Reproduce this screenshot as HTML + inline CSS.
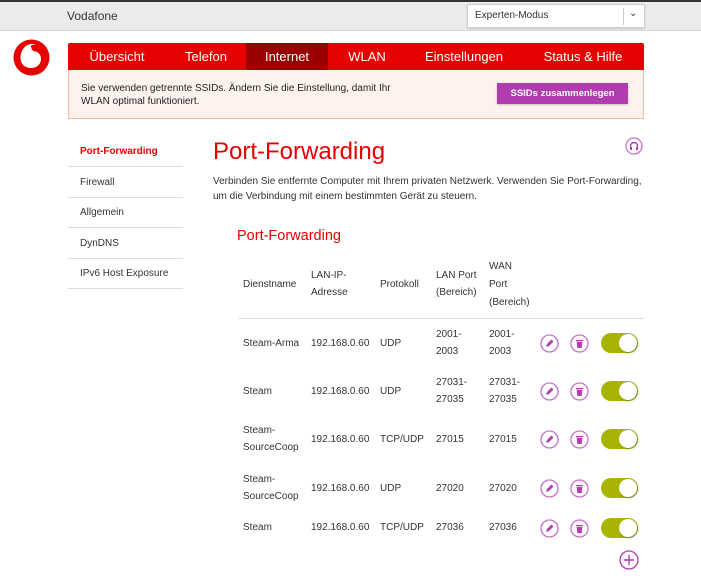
<!DOCTYPE html>
<html><head><meta charset="utf-8"><style>
*{margin:0;padding:0;box-sizing:border-box}
body{width:701px;height:585px;background:#fff;font-family:"Liberation Sans",sans-serif;color:#333;position:relative;overflow:hidden}
.a{position:absolute}
.top{left:0;top:0;width:701px;height:31px;background:#ebebeb;border-top:2px solid #333;border-bottom:1px solid #d6d6d6}
.nav{left:68px;top:43px;width:576px;height:27px;background:#e60000;border-radius:2px 2px 0 0}
.nav span{position:absolute;top:0;height:27px;line-height:27px;color:#fff;font-size:13px;text-align:center}
.side{font-size:10px;left:68px;width:115px;padding-left:12px;border-bottom:1px solid #ddd;height:30px;line-height:30px}
.t{font-size:10px;line-height:17px}
.tg{width:37px;height:20px;border-radius:10px;background:#a8b400}
.tg i{position:absolute;right:1px;top:1px;width:18px;height:18px;border-radius:50%;background:#fff;box-shadow:1px 1px 2px rgba(0,0,0,.3)}
</style></head><body>
<div class="a top"></div>
<div class="a" style="left:67px;top:9px;font-size:12px">Vodafone</div>
<div class="a" style="left:467px;top:4px;width:178px;height:24px;background:#fff;border:1px solid #ccc;box-shadow:0 1px 2px rgba(0,0,0,.15)"></div>
<div class="a" style="left:475px;top:10px;font-size:10px">Experten-Modus</div>
<div class="a" style="left:623px;top:8px;width:1px;height:17px;background:#ccc"></div>
<div class="a" style="left:629px;top:8px;font-size:10px">⌄</div>
<svg class="a" style="left:13px;top:39px" width="37" height="37" viewBox="0 0 37 37"><circle cx="18.5" cy="18.5" r="18" fill="#e60000"/><path d="M17 5C11 7 7.5 12 7.5 19c0 6 4.5 10 10.5 10s10-4 10-9c0-4.5-3-7.5-7-8 0-2.5 1-4.5 2.5-6-2-1-4-1.3-6.5-1z" fill="#fff"/><path d="M18 6.5c2-1 5-1.2 7-.5-2 1.3-3.5 3.5-3.5 6.5-2-.5-3.5-3-3.5-6z" fill="#e60000"/></svg>
<div class="a nav">
<span style="left:0;width:98px">Übersicht</span>
<span style="left:98px;width:80px">Telefon</span>
<span style="left:178px;width:82px;background:#990000">Internet</span>
<span style="left:260px;width:78px">WLAN</span>
<span style="left:338px;width:116px">Einstellungen</span>
<span style="left:454px;width:122px">Status &amp; Hilfe</span>
</div>
<div class="a" style="left:68px;top:70px;width:576px;height:49px;background:#fdf2ee;border:1px solid #f8b89a;border-top:none"></div>
<div class="a" style="left:81px;top:83px;font-size:10px;line-height:12.5px;color:#222">Sie verwenden getrennte SSIDs. Ändern Sie die Einstellung, damit Ihr<br>WLAN optimal funktioniert.</div>
<div class="a" style="left:497px;top:83px;width:131px;height:21px;background:#b03cb0;color:#fff;font-size:9.5px;font-weight:bold;text-align:center;line-height:21px;box-shadow:0 1px 2px rgba(0,0,0,.2)">SSIDs zusammenlegen</div>
<div class="a side" style="top:137px;color:#e60000;font-weight:bold">Port-Forwarding</div>
<div class="a side" style="top:168px">Firewall</div>
<div class="a side" style="top:198px">Allgemein</div>
<div class="a side" style="top:229px">DynDNS</div>
<div class="a side" style="top:259px">IPv6 Host Exposure</div>
<div class="a" style="left:213px;top:138px;font-size:24px;color:#e60000">Port-Forwarding</div>
<svg class="a" style="left:625px;top:137px" width="18" height="18"><circle cx="9" cy="9" r="8" fill="none" stroke="#c773c7" stroke-width="1.3"/><path d="M5.5 11V9a3.5 3.5 0 0 1 7 0v2" fill="none" stroke="#b03cb0" stroke-width="1.4"/><rect x="5" y="10" width="2" height="3" fill="#b03cb0"/><rect x="11" y="10" width="2" height="3" fill="#b03cb0"/></svg>
<div class="a t" style="left:213px;top:174px;line-height:15px">Verbinden Sie entfernte Computer mit Ihrem privaten Netzwerk. Verwenden Sie Port-Forwarding,<br>um die Verbindung mit einem bestimmten Gerät zu steuern.</div>
<div class="a" style="left:237px;top:228px;font-size:14.5px;color:#e60000">Port-Forwarding</div>
<div class="a t" style="left:243px;top:276px">Dienstname</div>
<div class="a t" style="left:311px;top:267px">LAN-IP-<br>Adresse</div>
<div class="a t" style="left:380px;top:276px">Protokoll</div>
<div class="a t" style="left:436px;top:267px">LAN Port<br>(Bereich)</div>
<div class="a t" style="left:489px;top:258px;line-height:18px">WAN<br>Port<br>(Bereich)</div>
<div class="a" style="left:238px;top:318px;width:406px;height:1px;background:#ddd"></div>

<div class="a t" style="left:243px;top:335px">Steam-Arma</div><div class="a t" style="left:311px;top:335px">192.168.0.60</div><div class="a t" style="left:380px;top:335px">UDP</div><div class="a t" style="left:436px;top:326px">2001-<br>2003</div><div class="a t" style="left:489px;top:326px">2001-<br>2003</div>
<div class="a t" style="left:243px;top:383px">Steam</div><div class="a t" style="left:311px;top:383px">192.168.0.60</div><div class="a t" style="left:380px;top:383px">UDP</div><div class="a t" style="left:436px;top:374px">27031-<br>27035</div><div class="a t" style="left:489px;top:374px">27031-<br>27035</div>
<div class="a t" style="left:243px;top:422px">Steam-<br>SourceCoop</div><div class="a t" style="left:311px;top:431px">192.168.0.60</div><div class="a t" style="left:380px;top:431px">TCP/UDP</div><div class="a t" style="left:436px;top:431px">27015</div><div class="a t" style="left:489px;top:431px">27015</div>
<div class="a t" style="left:243px;top:471px">Steam-<br>SourceCoop</div><div class="a t" style="left:311px;top:480px">192.168.0.60</div><div class="a t" style="left:380px;top:480px">UDP</div><div class="a t" style="left:436px;top:480px">27020</div><div class="a t" style="left:489px;top:480px">27020</div>
<div class="a t" style="left:243px;top:519px">Steam</div><div class="a t" style="left:311px;top:519px">192.168.0.60</div><div class="a t" style="left:380px;top:519px">TCP/UDP</div><div class="a t" style="left:436px;top:519px">27036</div><div class="a t" style="left:489px;top:519px">27036</div>

<div id="rows"></div>
<script>
var ys=[343,391,439,488,528],h='';
ys.forEach(function(y){
h+='<svg class="a" style="left:540px;top:'+(y-9)+'px" width="19" height="19"><circle cx="9.5" cy="9.5" r="8.5" fill="none" stroke="#c773c7" stroke-width="1.3"/><path d="M6 13l1-3 4.5-4.5 2 2L9 12z" fill="#b03cb0"/></svg>';
h+='<svg class="a" style="left:570px;top:'+(y-9)+'px" width="19" height="19"><circle cx="9.5" cy="9.5" r="8.5" fill="none" stroke="#c773c7" stroke-width="1.3"/><rect x="6" y="6" width="7" height="1.3" fill="#b03cb0"/><path d="M6.7 8h5.6l-.6 6H7.3z" fill="#b03cb0"/></svg>';
h+='<div class="a tg" style="left:601px;top:'+(y-10)+'px"><i></i></div>';
});
h+='<svg class="a" style="left:619px;top:550px" width="20" height="20"><circle cx="10" cy="10" r="9" fill="none" stroke="#b03cb0" stroke-width="1.3"/><path d="M10 5v10M5 10h10" stroke="#b03cb0" stroke-width="1.4"/></svg>';
document.getElementById('rows').innerHTML=h;
</script>
</body></html>
